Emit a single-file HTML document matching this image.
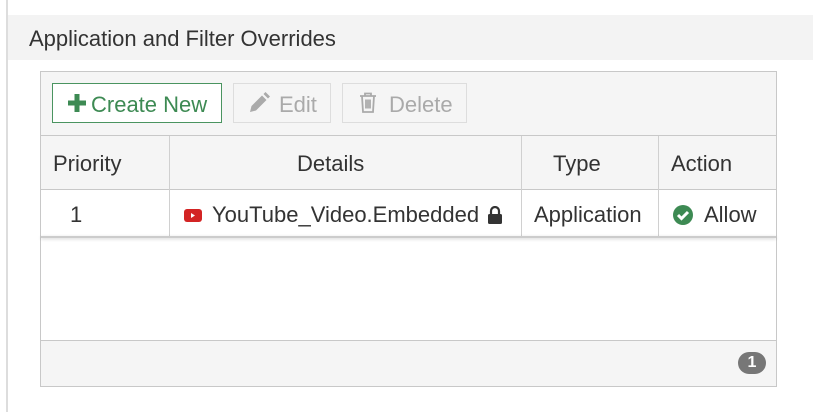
<!DOCTYPE html>
<html><head><style>
body{margin:0;width:813px;height:412px;background:#fff;font-family:"Liberation Sans",sans-serif;color:#333;position:relative;overflow:hidden}
.abs{position:absolute}
.vl{left:6px;top:0;width:2px;height:412px;background:#ddd}
.hdr{left:8px;top:16px;width:805px;height:44px;background:#f3f3f3;font-size:22px;line-height:46px;padding-left:21px;box-sizing:border-box;color:#333}
.hdr2{left:8px;top:15px;width:805px;height:45px;background:#f3f3f3}
.box{left:40px;top:71px;width:737px;height:316px;border:1px solid #c8c8c8;box-sizing:border-box;background:#fff}
.tb{left:41px;top:72px;width:735px;height:63px;background:#f5f5f5;border-bottom:1px solid #c8c8c8}
.btn{position:absolute;top:83px;height:40px;box-sizing:border-box;border:1px solid #ddd;font-size:22px;line-height:41px;color:#aaa;background:#f5f5f5}
.th{top:136px;height:53px;background:#f5f5f5;border-bottom:1px solid #c8c8c8;font-size:22px;line-height:55px}
.td{top:190px;height:47px;font-size:22px;line-height:50px}
.sep{width:1px;background:#d0d0d0}
</style></head><body>
<div class="abs vl"></div>
<div class="abs hdr2"></div>
<div class="abs hdr">Application and Filter Overrides</div>
<div class="abs box"></div>
<div class="abs tb"></div>
<div class="btn" style="left:52px;width:170px;border-color:#4a9460;color:#3d8a53;background:#fff;padding-left:14px">
<svg width="20" height="20" viewBox="0 0 20 20" style="position:absolute;left:14px;top:9px"><path d="M7.5 1h5v6.5H19v5h-6.5V19h-5v-6.5H1v-5h6.5z" fill="#3d8a53"/></svg><span style="margin-left:24px">Create New</span></div>
<div class="btn" style="left:233px;width:98px;padding-left:14px">
<svg width="22" height="22" viewBox="0 0 22 22" style="position:absolute;left:14px;top:8px"><path d="M2 20l1.5-6L14 3.5l4.5 4.5L8 18.5z M15.5 2l2-2 4.5 4.5-2 2z" fill="#aaa"/></svg><span style="margin-left:31px">Edit</span></div>
<div class="btn" style="left:342px;width:125px;padding-left:14px">
<svg width="18" height="22" viewBox="0 0 18 22" style="position:absolute;left:16px;top:8px"><path d="M1 4h16M6 4V1.5h6V4M3 4l1 16h10l1-16M7 7.5v9M9 7.5v9M11 7.5v9" stroke="#aaa" stroke-width="1.8" fill="none"/></svg><span style="margin-left:32px">Delete</span></div>
<div class="abs th" style="left:41px;width:735px"></div>
<div class="abs th" style="left:53px">Priority</div>
<div class="abs th" style="left:297px">Details</div>
<div class="abs th" style="left:553px">Type</div>
<div class="abs th" style="left:671px">Action</div>
<div class="abs sep" style="left:169px;top:136px;height:101px"></div>
<div class="abs sep" style="left:521px;top:136px;height:101px"></div>
<div class="abs sep" style="left:658px;top:136px;height:101px"></div>
<div class="abs" style="left:41px;top:236px;width:735px;height:2px;background:#ccc;box-shadow:0 1px 3px rgba(0,0,0,.2)"></div>
<div class="abs td" style="left:70px">1</div>
<svg class="abs" style="left:184px;top:209px" width="18" height="13" viewBox="0 0 18 13"><rect width="18" height="13" rx="3" fill="#d32424"/><path d="M7 4l4 2.5-4 2.5z" fill="#fff"/></svg>
<div class="abs td" style="left:212px">YouTube_Video.Embedded</div>
<svg class="abs" style="left:487px;top:206px" width="16" height="18" viewBox="0 0 16 18"><path d="M4 8V5a4 4 0 0 1 8 0v3" stroke="#333" stroke-width="2.2" fill="none"/><rect x="1" y="8" width="14" height="10" rx="1.5" fill="#333"/></svg>
<div class="abs td" style="left:534px">Application</div>
<svg class="abs" style="left:672px;top:204px" width="22" height="22" viewBox="0 0 22 22"><circle cx="11" cy="11" r="10" fill="#3d8a53"/><path d="M6 11l3.5 3.5L16 8" stroke="#fff" stroke-width="3" fill="none"/></svg>
<div class="abs td" style="left:704px">Allow</div>
<div class="abs" style="left:41px;top:340px;width:735px;height:45px;background:#f5f5f5;border-top:1px solid #c8c8c8"></div>
<div class="abs" style="left:738px;top:352px;width:28px;height:22px;border-radius:11px;background:#777;color:#fff;font-size:16px;font-weight:bold;line-height:22px;text-align:center">1</div>
</body></html>
